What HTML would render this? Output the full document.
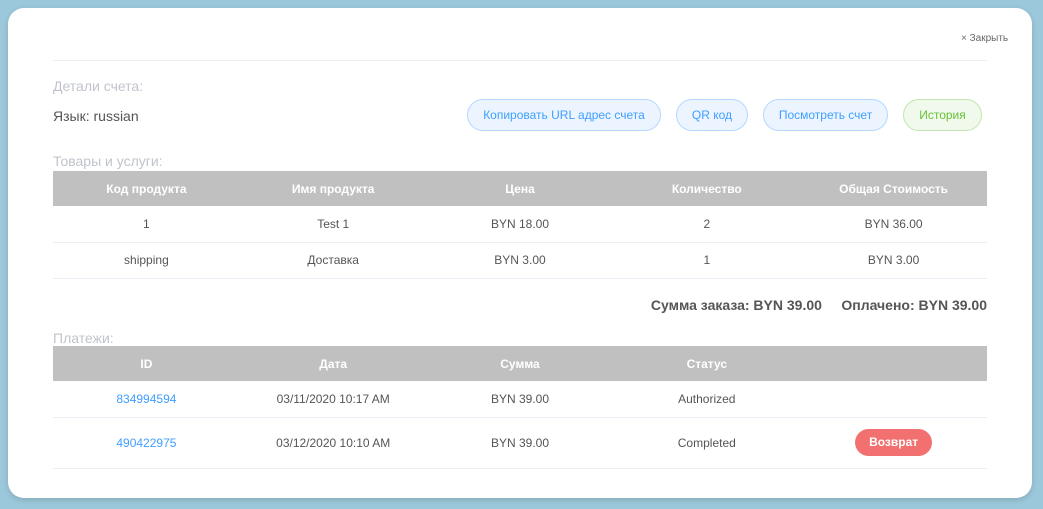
<!DOCTYPE html>
<html><head><meta charset="utf-8"><style>
*{margin:0;padding:0;box-sizing:border-box}
body{width:1043px;height:509px;background:#9bc8da;font-family:"Liberation Sans",sans-serif;position:relative;overflow:hidden}
.card{position:absolute;left:8px;top:8px;width:1024px;height:490px;background:#fff;border-radius:16px;box-shadow:0 2px 6px rgba(0,0,0,.15)}
.a{position:absolute;white-space:nowrap}
.lbl{font-size:14px;color:#c0c4cc}
.btn{position:absolute;top:99px;height:32px;border-radius:16px;border:1px solid #b3d8ff;background:#ecf5ff;color:#409eff;font-size:12px;line-height:30px;text-align:center}
table{position:absolute;left:53px;width:934px;border-collapse:collapse;font-size:12px;color:#555;table-layout:fixed}
th{background:#c0c0c0;color:#fff;font-weight:bold;height:35px;text-align:center}
td{text-align:center;border-bottom:1px solid #ebeef5}
a{color:#409eff;text-decoration:none}
</style></head><body>
<div class="card"></div>
<div class="a" style="left:961px;top:33px;font-size:10px;color:#666">× Закрыть</div>
<div class="a" style="left:53px;top:60px;width:934px;height:1px;background:#ebeef5"></div>
<div class="a lbl" style="left:53px;top:78px">Детали счета:</div>
<div class="a" style="left:53px;top:108px;font-size:14px;color:#555">Язык: russian</div>
<div class="btn" style="left:467px;width:194px">Копировать URL адрес счета</div>
<div class="btn" style="left:676px;width:72px">QR код</div>
<div class="btn" style="left:763px;width:125px">Посмотреть счет</div>
<div class="btn" style="left:903px;width:79px;border-color:#c2e7b0;background:#f0f9eb;color:#67c23a">История</div>
<div class="a lbl" style="left:53px;top:153px">Товары и услуги:</div>
<table style="top:171px">
<tr><th>Код продукта</th><th>Имя продукта</th><th>Цена</th><th>Количество</th><th>Общая Стоимость</th></tr>
<tr style="height:36px"><td>1</td><td>Test 1</td><td>BYN 18.00</td><td>2</td><td>BYN 36.00</td></tr>
<tr style="height:36px"><td>shipping</td><td>Доставка</td><td>BYN 3.00</td><td>1</td><td>BYN 3.00</td></tr>
</table>
<div class="a" style="right:56px;top:297px;font-size:14px;font-weight:bold;color:#555">Сумма заказа: BYN 39.00&nbsp;&nbsp;&nbsp;&nbsp;&nbsp;Оплачено: BYN 39.00</div>
<div class="a lbl" style="left:53px;top:330px">Платежи:</div>
<table style="top:346px">
<tr><th>ID</th><th>Дата</th><th>Сумма</th><th>Статус</th><th></th></tr>
<tr style="height:36px"><td><a>834994594</a></td><td>03/11/2020 10:17 AM</td><td>BYN 39.00</td><td>Authorized</td><td></td></tr>
<tr style="height:51px"><td><a>490422975</a></td><td>03/12/2020 10:10 AM</td><td>BYN 39.00</td><td>Completed</td><td><span style="display:inline-block;width:77px;height:27px;line-height:27px;border-radius:14px;background:#f37070;color:#fff;font-size:12px;font-weight:bold;margin-right:0">Возврат</span></td></tr>
</table>
</body></html>
